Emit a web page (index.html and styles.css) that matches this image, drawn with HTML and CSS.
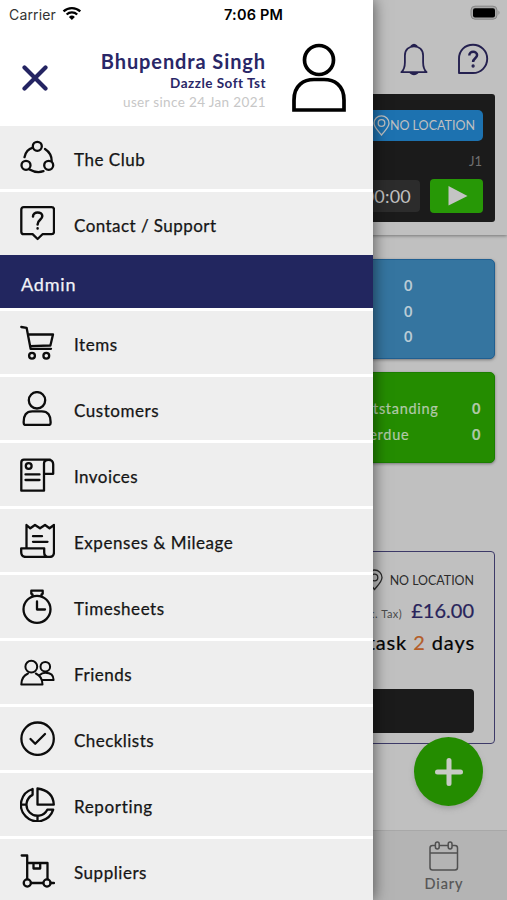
FILE: index.html
```html
<!DOCTYPE html>
<html lang="en">
<head>
<meta charset="utf-8">
<title>Menu</title>
<link rel="stylesheet" href="styles.css">
</head>
<body>
<div class="app">
  <main class="page">
    <section class="top">
      <div class="battery-row">
        <svg width="31" height="16" viewBox="0 0 31 16"><rect x="1" y="1.2" width="26" height="13" rx="4" fill="#aaa" stroke="#858585"/><rect x="3" y="3.2" width="22" height="9.2" rx="2" fill="#000"/><path d="M28.5 5.5q2 2.2 0 4.4z" fill="#858585"/></svg>
      </div>
      <div class="actions">
        <svg width="28" height="33" viewBox="0 0 28 33" fill="none" stroke="#24204f" stroke-width="1.8" stroke-linejoin="round"><path d="M1.4 29.2c3.2-3 3.5-5.6 3.5-10V12.500C4.900 6.500 9 3.300 14 3.300s9.100 3.200 9.100 9.200v6.700c0 4.400.3 7 3.500 10z"/><path d="M11.500 3Q14 .5 16.500 3zM10.500 29.800q3.500 3 7 0z" fill="#24204f"/></svg>
        <svg width="32" height="32" viewBox="0 0 32 32" fill="none" stroke="#24204f" stroke-width="1.9"><path d="M2 30V15.700C2 7.500 8 1.800 16 1.800S30.200 8 30.200 15.800 24 30 16 30z" stroke-linejoin="round"/><path d="M12.300 12.500c0-5.200 7.800-4.700 7.800-.4 0 3.300-4 3.200-4 7" stroke-width="2.500"/><circle cx="16.100" cy="23" r=".7"/></svg>
      </div>
      <div class="timer-card">
        <div class="location-button">
          <svg width="17" height="21" viewBox="0 0 17 21" fill="none" stroke="#c0c0c0" stroke-width="1.300"><path d="M8.500 20C4 14.500 1 12 1 8.300a7.500 7.500 0 0 1 15 0c0 3.700-3 6.200-7.500 11.700z"/><circle cx="8.500" cy="8" r="3.300"/></svg><span>NO LOCATION</span>
        </div>
        <div class="job">J1</div>
        <div class="timer-row">
          <div class="clock">00:00:00</div>
          <div class="play"><svg width="20" height="20" viewBox="0 0 20 20"><path d="M.5 0L19.500 10 .5 19.500z" fill="#c4c4c4"/></svg></div>
        </div>
      </div>
    </section>
    <section class="panel blue"><b>0</b><b>0</b><b>0</b></section>
    <section class="panel green">
      <div><span>Outstanding</span><b>0</b></div>
      <div><span>Overdue</span><b>0</b></div>
    </section>
    <section class="task-card">
      <div class="task-location"><svg width="17" height="22" viewBox="0 0 17 22" fill="none" stroke="#2b2b2b" stroke-width="1.300"><path d="M8.500 20.500C4 15 1 12.300 1 8.500a7.500 7.500 0 0 1 15 0c0 3.800-3 6.500-7.500 12z"/><circle cx="8.500" cy="8.500" r="3.300"/></svg><span>NO LOCATION</span></div>
      <div class="price"><small>(Inc. Tax)</small><span>£16.00</span></div>
      <div class="due">task <em>2</em> days</div>
      <div class="bar"></div>
    </section>
    <nav class="tabs"><div class="tab">
      <svg width="30" height="30" viewBox="0 0 30 30" fill="none" stroke="#505050" stroke-width="1.500"><rect x="1" y="4.500" width="27.500" height="24.500" rx="2.500"/><path d="M1 12h27.500"/><rect x="6.400" y="1" width="3.800" height="7" rx="1.900" fill="#b4b4b4"/><rect x="19.200" y="1" width="3.800" height="7" rx="1.900" fill="#b4b4b4"/></svg>
      <span>Diary</span></div>
    </nav>
    <div class="add"><svg width="30" height="30" viewBox="0 0 30 30"><path d="M15 3.500v23M3.500 15h23" stroke="#c7cbc3" stroke-width="5" stroke-linecap="round"/></svg></div>
  </main>

  <aside class="drawer">
    <div class="status">
      <span class="carrier">Carrier</span>
      <svg width="20" height="15" viewBox="0 0 20 15" fill="none" stroke="#000" stroke-width="2.300"><path d="M1.500 5.400a12.300 12.300 0 0 1 16.800 0M4.600 8.500a7.700 7.700 0 0 1 10.600 0"/><path d="M6.900 11a4.400 4.400 0 0 1 6 0l-3 3z" fill="#000" stroke="none"/></svg>
      <span class="time">7:06 PM</span>
    </div>
    <header class="profile">
      <svg class="close" width="26" height="26" viewBox="0 0 26 26"><path d="M2.500 2.500l21 21M23.500 2.500l-21 21" stroke="#242462" stroke-width="4.200" stroke-linecap="round"/></svg>
      <div class="who"><div class="name">Bhupendra Singh</div><div class="company">Dazzle Soft Tst</div><div class="since">user since 24 Jan 2021</div></div>
      <svg class="avatar" width="54" height="70" viewBox="0 0 54 70" fill="none" stroke="#000" stroke-width="3.700"><circle cx="27" cy="17" r="14.500"/><path d="M2 67V57C2 42 12 36.500 22 36.500h10C42 36.500 52 42 52 57v10z"/></svg>
    </header>
    <ul class="menu">
      <li><svg viewBox="0 0 35 35"><circle cx="17.300" cy="6.300" r="4.500"/><circle cx="6" cy="25.300" r="4.500"/><circle cx="28.700" cy="25.300" r="4.500"/><path d="M4.500 17.200Q6 9.600 12.800 7.700M25 9q6.700 4.400 6.700 12M9.500 29.500q7 4 14 1.700"/></svg><span>The Club</span></li>
      <li class="support"><svg viewBox="0 0 35 35"><path d="M3.800 1.200h27.700q2.500 0 2.500 2.500v22q0 2.500-2.500 2.500h-9L17.600 33l-5-4.800H3.800q-2.500 0-2.500-2.500v-22q0-2.500 2.500-2.500z"/><path d="M13 10.500c0-5.600 9.300-5.200 9.300-.5 0 4-4.700 3.700-4.700 8.500M17.600 22.200v.3" stroke-width="2.500"/></svg><span class="tight">Contact / Support</span></li>
      <li class="heading"><span>Admin</span></li>
      <li><svg viewBox="0 0 35 35"><path d="M1.300 2l5.300.8 4 21H31M8 9.500h25l-2.600 11L10 21.200"/><circle cx="12" cy="30.700" r="2.900"/><circle cx="26.300" cy="30.700" r="2.900"/></svg><span>Items</span></li>
      <li><svg viewBox="0 0 35 35"><circle cx="17" cy="9.300" r="8.200"/><path d="M3.700 32q-.5-11.700 8.600-11.700h9.500q9.200 0 8.800 11.700 0 2-2 2H5.700q-2 0-2-2z"/></svg><span>Customers</span></li>
      <li><svg viewBox="0 0 35 35"><path d="M30 2.700H4q-2.700 0-2.700 2.700v28.300H24V6.500q0-3.700 4.500-3.700 4.700 0 4.700 4.500v9.500H24M5.500 17.400h14M5.500 23h14"/><circle cx="8.700" cy="9" r="2.900"/></svg><span class="tight">Invoices</span></li>
      <li><svg viewBox="0 0 35 35"><path d="M6.500 25V2l3.800 3.300L15 2l5 3.300L25 2l4.500 3.300L34 2v27q0 5-4.500 5H6Q1.200 34 1.200 29v-3.700h23v4.200q0 4.500 5 4.500M13 13.200h9M13 18.800h14.500"/></svg><span>Expenses &amp; Mileage</span></li>
      <li><svg viewBox="0 0 35 35"><circle cx="17" cy="20.300" r="13.500"/><path d="M12.500 7V5.300l-1.200-.5V1.700h11.400v3.100l-1.200.5V7M17 12.500v8h8"/></svg><span>Timesheets</span></li>
      <li><svg viewBox="0 0 35 35" class="fine"><circle cx="11.300" cy="11.700" r="5.900"/><circle cx="25.300" cy="11.700" r="4.800"/><path d="M8 18.500Q1.300 21.500 1.300 29.500h21.200q0-8-6.700-11M19.700 20q2.300-2.300 5.600-2.300 8.300 0 8.300 7.300H22"/></svg><span>Friends</span></li>
      <li><svg viewBox="0 0 35 35"><circle cx="17.600" cy="17.700" r="16.200"/><path d="M10.500 18l4.700 4.700L25 13" stroke-width="2.300"/></svg><span class="tight">Checklists</span></li>
      <li><svg viewBox="0 0 35 35"><path d="M17.500 1.500V17.700h16.300Q33 3.500 17.500 1.500z"/><path d="M12.600 2v5.850a11 11 0 1 0 14.700 14.850h5.900A16.500 16.500 0 1 1 12.600 2zM1.200 17.700H6.500M17.500 28.700v5.400"/></svg><span class="loose">Reporting</span></li>
      <li><svg viewBox="0 0 35 35"><path d="M1.700 2.500h5.500V26M7.200 10h20.300v16M13.500 10v5.500h6.700V10M11 30h12M30.500 30H34"/><circle cx="7.300" cy="30" r="3.600"/><circle cx="27" cy="30" r="3.600"/></svg><span>Suppliers</span></li>
    </ul>
  </aside>
</div>
</body>
</html>
```

FILE: styles.css
```css
* { box-sizing: border-box; }
body { margin: 0; font-family: Lato, "Noto Sans", sans-serif; }
svg { display: block; flex: none; }
.app { position: relative; width: 507px; height: 900px; overflow: hidden; background: #c0c0c0; }

.page { display: flex; flex-direction: column; height: 900px; padding-left: 250px; }
.top { height: 235px; padding-right: 12px; flex: none; box-shadow: 0 1px 3px #777; }
.battery-row { height: 43px; padding-top: 5px; display: flex; justify-content: flex-end; margin-right: -6px; }
.actions { height: 51px; display: flex; justify-content: flex-end; gap: 29px; padding-right: 6px; }
.timer-card { height: 128px; background: #1b1b1b; border-radius: 3px; padding: 16px 12px 8px; }
.location-button { height: 31px; background: #1d72b0; border-radius: 5px; color: #c0c0c0; font-size: 12.5px; display: flex; align-items: center; justify-content: flex-end; gap: 0; padding-right: 8px; }
.job { height: 38px; text-align: right; font-size: 13px; line-height: 40px; padding-right: 1px; color: #707070; }
.timer-row { display: flex; gap: 10px; height: 34px; }
.clock { flex: 1; margin: 1px 0; background: #2c2c2c; border-radius: 4px; color: #c0c0c0; font-size: 18px; line-height: 32px; text-align: right; padding-right: 9px; letter-spacing: .2px; }
.play { width: 53px; border-radius: 4px; background: #279806; display: flex; align-items: center; justify-content: center; }
.play svg { margin-left: 3px; }

.panel { margin-right: 12px; flex: none; border-radius: 5px; color: #b9cbd5; font-size: 14.5px; box-shadow: 0 1px 3px #777; }
.blue { margin-top: 24px; height: 100px; background: #3575a0; border: 1px solid #205f91; padding: 13px 0 0 153px; display: flex; flex-direction: column; line-height: 25.700px; }
.green { margin-top: 13px; height: 91px; background: #248c00; border: 1px solid #1b7e00; color: #b1c9a8; padding: 23px 13px 0 101px; line-height: 25.500px; }
.green div { display: flex; justify-content: space-between; letter-spacing: .7px; -webkit-text-stroke: .2px; }
.green div:last-child span { margin-left: -3px; }
.task-card { margin: 88px 12px 0 0; height: 193px; flex: none; border: 1px solid #3d3a68; border-radius: 4px; padding: 17px 20px 0; text-align: right; }
.task-location { height: 22px; display: flex; align-items: center; justify-content: flex-end; gap: 7px; font-size: 12.400px; color: #2b2b2b; }
.price { height: 36px; display: flex; justify-content: flex-end; align-items: baseline; gap: 9px; color: #28245b; font-size: 20px; line-height: 38px; -webkit-text-stroke: .2px; }
.price small { color: #4b4b4b; font-size: 11px; letter-spacing: .5px; -webkit-text-stroke: 0; }
.due { height: 62px; line-height: 30px; font-size: 20px; letter-spacing: .9px; margin-right: -1px; color: #050505; -webkit-text-stroke: .2px; }
.due em { font-style: normal; color: #b45d29; }
.bar { height: 44px; background: #1b1b1b; border-radius: 4px; }
.tabs { margin-top: auto; flex: none; height: 70px; background: #b4b4b4; border-top: 1px solid #a8a8a8; display: flex; justify-content: flex-end; padding-right: 33px; }
.tab { width: 60px; padding-top: 10px; display: flex; flex-direction: column; align-items: center; font-size: 14.500px; color: #555; line-height: 26px; letter-spacing: .9px; -webkit-text-stroke: .2px; }
.add { position: absolute; left: 414px; top: 737px; width: 69px; height: 69px; border-radius: 50%; background: #248c00; display: flex; align-items: center; justify-content: center; box-shadow: 0 3px 5px #8888; }

.drawer { position: absolute; inset: 0 auto 0 0; width: 373px; background: #fff; box-shadow: 1px 0 14px #0008; overflow: hidden; }
.status { height: 28px; display: flex; align-items: center; padding-left: 9px; font-family: Inter, sans-serif; font-size: 14px; }
.carrier { width: 53px; color: #333; letter-spacing: .15px; }
.status svg { margin-top: -2px; }
.time { margin-left: 142px; font-size: 14.500px; font-weight: 600; letter-spacing: .2px; white-space: nowrap; }
.profile { height: 98px; display: flex; }
.close { margin: 37px 0 0 22px; }
.who { width: 218px; padding-top: 20px; text-align: right; color: #292767; white-space: nowrap; }
.name { height: 26px; line-height: 26px; font-size: 20px; font-weight: 700; letter-spacing: .900px; }
.company { height: 19px; line-height: 19px; font-size: 13.500px; font-weight: 700; letter-spacing: .500px; }
.since { height: 18px; line-height: 18px; font-size: 13.500px; color: #c7c7c7; letter-spacing: .350px; }
.avatar { margin: 15px 0 0 26px; }
.menu { list-style: none; margin: 0; padding: 0; }
.menu li { height: 63px; margin-bottom: 3px; padding-left: 20px; display: flex; align-items: center; gap: 19px; background: #eee; color: #151515; font-size: 17px; letter-spacing: .540px; -webkit-text-stroke: .25px; }
.menu li.support { margin-bottom: 0; }
.menu li.heading { height: 53px; margin-bottom: 3px; padding: 3px 0 0 21px; color: #f2f2f8; background: #22265f; font-size: 18px; letter-spacing: .800px; }
.menu svg { width: 35px; height: 35px; fill: none; stroke: #0c0c0c; stroke-width: 2.300; stroke-linejoin: round; stroke-linecap: round; }
.menu svg.fine { stroke-width: 2; }
.menu span { white-space: nowrap; margin-top: 3px; }
.menu .tight { letter-spacing: .450px; }
.menu .loose { letter-spacing: .650px; }
.menu .heading span { margin-top: 1px; }
```
